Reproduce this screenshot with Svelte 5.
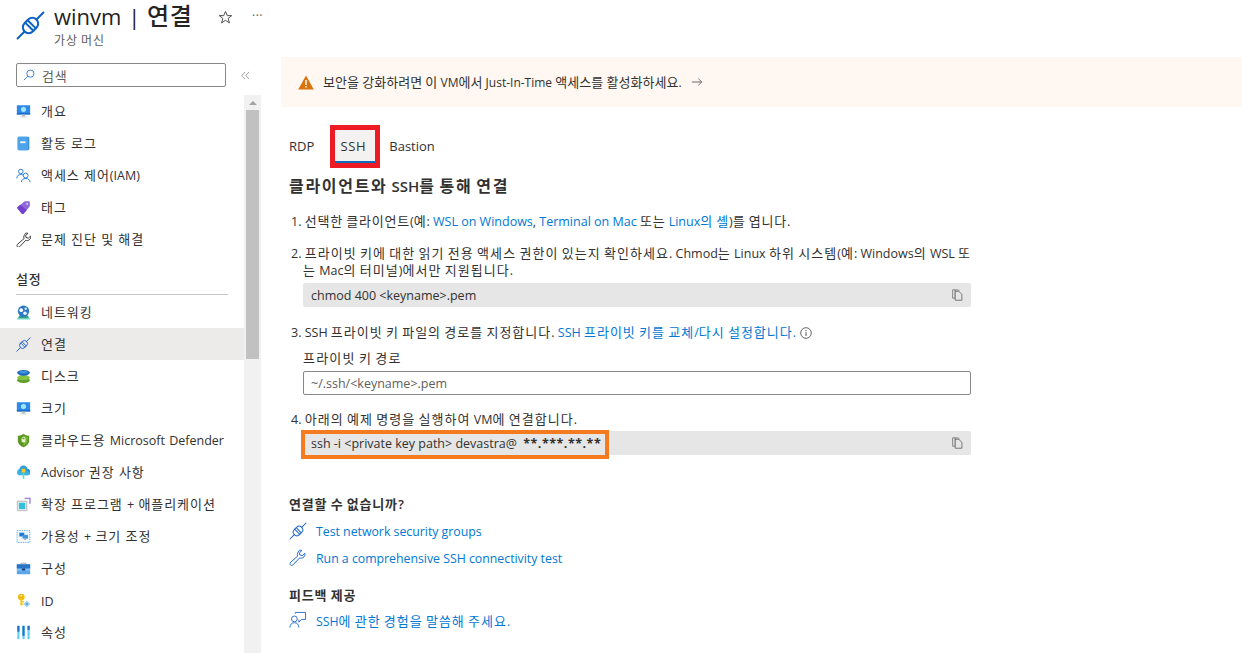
<script>
  const topItems = [
    { label: '개요', icon: 'monitor' },
    { label: '활동 로그', icon: 'log' },
    { label: '액세스 제어(IAM)', icon: 'iam' },
    { label: '태그', icon: 'tag' },
    { label: '문제 진단 및 해결', icon: 'wrench' }
  ];
  const settingItems = [
    { label: '네트워킹', icon: 'network' },
    { label: '연결', icon: 'plug', active: true },
    { label: '디스크', icon: 'disk' },
    { label: '크기', icon: 'monitor' },
    { label: '클라우드용 Microsoft Defender', icon: 'shield' },
    { label: 'Advisor 권장 사항', icon: 'advisor' },
    { label: '확장 프로그램 + 애플리케이션', icon: 'ext' },
    { label: '가용성 + 크기 조정', icon: 'avail' },
    { label: '구성', icon: 'case' },
    { label: 'ID', icon: 'key' },
    { label: '속성', icon: 'props' }
  ];
  // Hangul runs get their own metrics, because the Latin and Korean faces differ in width.
  const runs = (text) => text.split(/([\uac00-\ud7a3]+)/).filter(Boolean);
  const isKo = (run) => /[\uac00-\ud7a3]/.test(run);
</script>

{#snippet t(text)}{#each runs(text) as run}<span class:ko={isKo(run)}>{run}</span>{/each}{/snippet}

{#snippet plug(color, width)}
  <g transform="rotate(-45 10 10)" fill="none" stroke={color} stroke-width={width} stroke-linecap="round">
    <path d="M-2.6 10H4.2M15.8 10H22.6" />
    <rect x="4.2" y="6" width="11.6" height="8" rx="4" />
    <path d="M8.8 6V14M11.2 6V14" />
  </g>
{/snippet}

{#snippet wrench(color)}
  <path fill="none" stroke={color} stroke-width="1.1" stroke-linejoin="round" d="M11.5 1.5 L9.6 4.6 C9.2 5.6 9.2 6.8 9.7 7.8 L1.8 14.8 C1 15.8 1 16.8 1.6 17.6 C2.4 18.4 3.6 18.4 4.4 17.6 L11.8 9.9 C13 10.4 14.5 10.3 15.6 9.6 C17.2 8.6 18 6.8 17.6 4.8 L14.8 7.4 L12 6.6 L11.6 4.2 L14.4 1.6 C13.4 1.2 12.4 1.2 11.5 1.5 Z" />
{/snippet}

{#snippet icon(name)}
  <svg class="nav-icon" viewBox="0 0 18 18" aria-hidden="true">
    {#if name === 'monitor'}
      <rect x="1" y="1.5" width="16" height="11" rx=".6" fill="#2f89e6" />
      <rect x="1" y="11" width="16" height="1.5" fill="#1565c0" />
      <path d="M9 3.2 12 4.9V8.3L9 10 6 8.3V4.9Z" fill="#9fe3f8" />
      <path d="M7.3 12.5h3.4v2.3H7.3z" fill="#b3b6ba" />
      <path d="M5.5 14.8h7v1.2h-7z" fill="#c6c9cc" />
    {:else if name === 'log'}
      <rect x="2" y="1" width="14" height="16" rx="1.6" fill="#3a8fdd" />
      <rect x="2" y="1" width="12.4" height="16" rx="1.4" fill="#4ea3ea" />
      <rect x="5" y="6.4" width="6.4" height="2.2" fill="#f4f8fc" />
    {:else if name === 'iam'}
      <g fill="none" stroke="#2f7fd6" stroke-width="1.2">
        <circle cx="5.8" cy="4.2" r="2.7" />
        <path d="M1 12.5 C1 9.5 3 7.8 5.8 7.8 C7 7.8 8 8.1 8.8 8.7" />
        <circle cx="11.6" cy="9" r="2.9" />
        <path d="M6.4 17 C6.6 14 8.6 12.6 11.6 12.6 C14.6 12.6 16.6 14 16.9 17" />
      </g>
    {:else if name === 'tag'}
      <path d="M1.2 9.4 9.6 2 C10.2 1.5 10.8 1.4 11.6 1.4 H15.2 C16 1.4 16.6 2 16.6 2.8 V7 C16.6 7.6 16.4 8 16 8.5 L9 16.4 C8.4 17 7.6 17 7 16.4 Z" fill="#8f6ad6" />
      <path d="M1.2 9.4 7 16.4 C7.6 17 8.4 17 9 16.4 L13 12 5 5.8Z" fill="#7340cf" />
      <circle cx="13.4" cy="4.6" r="1.1" fill="#e5dcf6" />
    {:else if name === 'wrench'}
      {@render wrench('#2b2b2b')}
    {:else if name === 'network'}
      <path d="M1 15.8 H17 V17.4 H1Z" fill="#6fdcc4" />
      <path d="M3.8 13 H14.2 L15.6 15.8 H2.4Z" fill="#2f9f8c" />
      <circle cx="9" cy="7.5" r="6.8" fill="#2b78c8" />
      <circle cx="6.3" cy="6.2" r="2.2" fill="#fff" />
      <circle cx="11.6" cy="4.4" r="1.5" fill="#cfe9fa" />
      <circle cx="10.8" cy="10" r="2.1" fill="#eef7fd" />
    {:else if name === 'plug'}
      <g transform="scale(.9)">{@render plug('#1f66cc', 1.25)}</g>
    {:else if name === 'disk'}
      <ellipse cx="9" cy="13.4" rx="7.6" ry="3.4" fill="#5e9e28" />
      <rect x="4.5" y="7" width="9" height="6" fill="#59b4d9" />
      <ellipse cx="9" cy="10.6" rx="7.6" ry="3" fill="#84c441" />
      <ellipse cx="9" cy="4.6" rx="7.6" ry="3.4" fill="#1f66b8" />
      <ellipse cx="9" cy="3.8" rx="5" ry="1.6" fill="#3f93e0" />
    {:else if name === 'shield'}
      <path d="M9 .8 C11 2.4 13.6 3.2 15.8 3.2 V9 C15.8 13 12.6 15.6 9 17.2 C5.4 15.6 2.2 13 2.2 9 V3.2 C4.4 3.2 7 2.4 9 .8Z" fill="#5e9624" />
      <path d="M9 2.8 C10.6 4 12.4 4.6 14 4.8 V9 C14 12 11.6 14 9 15.2Z" fill="#76b82f" />
      <circle cx="9" cy="7" r="2" fill="none" stroke="#e8f4d8" stroke-width="1" />
      <rect x="6.8" y="7.4" width="4.4" height="3.6" rx=".5" fill="#e8f4d8" />
    {:else if name === 'advisor'}
      <circle cx="5" cy="8.4" r="3.6" fill="#32bedd" />
      <circle cx="13" cy="8.4" r="4" fill="#1e88d8" />
      <circle cx="9" cy="5.6" r="5" fill="#2aa0e0" />
      <rect x="1.6" y="7.6" width="15" height="4.6" rx="2.2" fill="#37b2e6" />
      <rect x="6.8" y="4.6" width="4.4" height="4.4" fill="#ffc72c" stroke="#c79a12" stroke-width=".4" />
      <path d="M8 9.2h2V16.6H8z" fill="#5fd8c0" />
    {:else if name === 'ext'}
      <rect x="1" y="4.4" width="12.6" height="12.6" fill="#c4c4c4" />
      <rect x="2.6" y="6" width="9.4" height="9.4" fill="#fff" />
      <rect x="3.4" y="6.8" width="7.8" height="7.8" fill="#32bedd" />
      <path d="M10.4 1.4 H16.8 V8" fill="none" stroke="#7f5fd0" stroke-width="1.3" />
    {:else if name === 'avail'}
      <rect x="1.3" y="1.9" width="15.4" height="14.2" fill="#f4f9fd" stroke="#4d9ade" stroke-width="1" stroke-dasharray="1.6 1.2" />
      <rect x="4" y="4.4" width="6" height="4.6" fill="#1f78d1" />
      <rect x="8" y="7" width="6.4" height="4.6" fill="#3a96dd" />
      <path d="M9.8 11.6h2.4v1.6H9.8z" fill="#a9adb1" />
    {:else if name === 'case'}
      <path d="M6 4.5 V2.6 H12 V4.5" fill="none" stroke="#9a9a9a" stroke-width="1" />
      <rect x="1" y="4" width="16" height="12" rx=".5" fill="#5aa5ec" />
      <rect x="1" y="4" width="16" height="4.6" fill="#2a74c4" />
      <rect x="1" y="10.2" width="16" height="1.1" fill="#a9d0f3" />
      <rect x="7" y="9" width="4" height="2.4" fill="#123f73" />
    {:else if name === 'key'}
      <circle cx="6.4" cy="4.8" r="4" fill="#f2b90c" />
      <circle cx="6.4" cy="3.2" r="1.1" fill="#fff5c9" />
      <path d="M5.2 7h2.4v8H5.2z" fill="#f2c811" />
      <path d="M7.4 10h2.2v1.5H7.4zM7.4 12.6h1.8v1.5H7.4z" fill="#f2c811" />
      <path d="M13 9 17.4 13.2 13 17.4 8.8 13.2Z" fill="#a8d6ee" />
      <circle cx="13" cy="13.2" r="1.5" fill="#5ba9d8" />
    {:else if name === 'props'}
      <rect x="1.6" y="1" width="2.6" height="16" fill="#5fd0f5" />
      <rect x="1.6" y="1" width="2.6" height="7" fill="#1d74c8" />
      <rect x="7.7" y="1" width="2.6" height="16" fill="#5fd0f5" />
      <rect x="7.7" y="1" width="2.6" height="12" fill="#1d74c8" />
      <rect x="13.8" y="1" width="2.6" height="16" fill="#5fd0f5" />
      <rect x="13.8" y="1" width="2.6" height="5" fill="#1d74c8" />
    {/if}
  </svg>
{/snippet}

{#snippet copy()}
  <svg class="copy" viewBox="0 0 12 13" aria-hidden="true">
    <path d="M3.5 2.5 V1 H7 L8 2.2" fill="none" stroke="#7d7d7d" />
    <path d="M.7.8 H3.5 V10 H.7Z" fill="none" stroke="#7d7d7d" stroke-width="1" />
    <path d="M3.5 2.5 H7.4 L10.8 5.8 V12.2 H3.5Z" fill="#e6e6e6" stroke="#6c6c6c" stroke-width="1" />
  </svg>
{/snippet}

<div class="page">
  <header class="header">
    <svg class="hero-icon" viewBox="0 0 20 20" aria-hidden="true">{@render plug('#0f62c6', 1.4)}</svg>
    <div class="title-block">
      <div class="title-row">
        <h1>{@render t('winvm | 연결')}</h1>
        <svg class="star" viewBox="0 0 16 16" aria-hidden="true"><path d="M8 1.6 9.9 6H14.6L10.8 9 12.2 13.8 8 11 3.8 13.8 5.2 9 1.4 6H6.1Z" fill="none" stroke="#444" stroke-width="1" stroke-linejoin="round" /></svg>
        <span class="more">···</span>
      </div>
      <div class="subtitle">{@render t('가상 머신')}</div>
    </div>
  </header>

  <div class="body">
    <aside class="sidebar">
      <div class="search-row">
        <div class="search">
          <svg viewBox="0 0 14 14" aria-hidden="true"><circle cx="8.6" cy="5.4" r="4.2" fill="none" stroke="#1f6fc4" stroke-width="1" /><path d="M5.6 8.4 1 13" stroke="#1f6fc4" stroke-width="1" /></svg>
          <span>{@render t('검색')}</span>
        </div>
        <svg class="collapse" viewBox="0 0 10 10" aria-hidden="true"><path d="M4.6 1 .8 5 4.6 9M9 1 5.2 5 9 9" fill="none" stroke="#8a8886" stroke-width=".9" /></svg>
      </div>
      <div class="nav-wrap">
        <nav class="nav">
          {#each topItems as item}
            <div class="item">{@render icon(item.icon)}<span class="label">{@render t(item.label)}</span></div>
          {/each}
          <div class="section">{@render t('설정')}</div>
          {#each settingItems as item}
            <div class="item" class:active={item.active}>{@render icon(item.icon)}<span class="label" class:latin={!isKo(item.label)}>{@render t(item.label)}</span></div>
          {/each}
        </nav>
        <div class="scrollbar">
          <div class="arrow"></div>
          <div class="thumb"></div>
        </div>
      </div>
    </aside>

    <main class="main">
      <div class="banner">
        <svg viewBox="0 0 16 15" aria-hidden="true"><path d="M8 .6 15.8 14.4H.2Z" fill="#d9730d" /><path d="M7.3 5h1.4v5H7.3zM7.3 11h1.4v1.5H7.3z" fill="#fff" /></svg>
        <span class="banner-text">{@render t('보안을 강화하려면 이 VM에서 Just-In-Time 액세스를 활성화하세요.')}</span>
        <svg class="arrow-right" viewBox="0 0 14 10" aria-hidden="true"><path d="M1 5H12.4M8.6 1.2 12.6 5 8.6 8.8" fill="none" stroke="#555" stroke-width="1" /></svg>
      </div>

      <div class="content">
        <div class="tabs">
          <div class="tab">RDP</div>
          <div class="tab selected">SSH<div class="red-box"></div></div>
          <div class="tab">Bastion</div>
        </div>

        <h2>{@render t('클라이언트와 SSH를 통해 연결')}</h2>

        <ol class="steps">
          <li class="s1">{@render t('1. 선택한 클라이언트(예: ')}<a href="#a">WSL on Windows</a>, <a href="#a">Terminal on Mac</a>{@render t(' 또는 ')}<a href="#a">{@render t('Linux의 셸')}</a>{@render t(')를 엽니다.')}</li>
          <li class="s2">
            <div class="wrap">{@render t('2. 프라이빗 키에 대한 읽기 전용 액세스 권한이 있는지 확인하세요. Chmod는 Linux 하위 시스템(예: Windows의 WSL 또')}<br /><span class="hang">{@render t('는 Mac의 터미널)에서만 지원됩니다.')}</span></div>
            <div class="code">chmod 400 &lt;keyname&gt;.pem{@render copy()}</div>
          </li>
          <li class="s3">
            <div>{@render t('3. SSH 프라이빗 키 파일의 경로를 지정합니다. ')}<a href="#a">{@render t('SSH 프라이빗 키를 교체/다시 설정합니다.')}</a>
              <svg class="info" viewBox="0 0 12 12" aria-hidden="true"><circle cx="6" cy="6" r="5.3" fill="none" stroke="#555" stroke-width=".9" /><path d="M6 5.2V9M6 3v1.2" stroke="#555" stroke-width="1" /></svg>
            </div>
            <div class="field-label">{@render t('프라이빗 키 경로')}</div>
            <div class="input">~/.ssh/&lt;keyname&gt;.pem</div>
          </li>
          <li class="s4">
            <div>{@render t('4. 아래의 예제 명령을 실행하여 VM에 연결합니다.')}</div>
            <div class="code">
              <span class="cmd">ssh -i &lt;private key path&gt; devastra@ <b>**.***.**.**</b><span class="orange-box"></span></span>{@render copy()}
            </div>
          </li>
        </ol>

        <h3 class="trouble">{@render t('연결할 수 없습니까?')}</h3>
        <a class="link first" href="#a"><svg viewBox="0 0 20 20" aria-hidden="true">{@render plug('#1f66cc', 1.1)}</svg><span>Test network security groups</span></a>
        <a class="link second" href="#a"><svg viewBox="0 0 20 20" aria-hidden="true">{@render wrench('#1f66cc')}</svg><span>Run a comprehensive SSH connectivity test</span></a>

        <h3 class="feedback">{@render t('피드백 제공')}</h3>
        <a class="link last" href="#a">
          <svg viewBox="0 0 20 20" aria-hidden="true"><g fill="none" stroke="#1f66cc" stroke-width="1"><path d="M7 3 V1.6 H18.4 V9.4 H14 L11 12.4 V9.6" /><circle cx="6" cy="8.8" r="3.2" /><path d="M1 18.4 C1.2 14.8 3 13 6 13 C9 13 10.8 14.8 11 18.4" /></g></svg>
          <span>{@render t('SSH에 관한 경험을 말씀해 주세요.')}</span>
        </a>
      </div>
    </main>
  </div>
</div>

<style>
  :global(body) {
    margin: 0;
    background: #fff;
    overflow: hidden;
  }
  .page {
    width: 1242px;
    height: 653px;
    overflow: hidden;
    font-family: "Open Sans", "Noto Sans CJK KR", sans-serif;
    font-size: 12.5px;
    color: #323130;
  }
  .ko {
    font-size: 13px;
    letter-spacing: .8px;
  }
  a {
    color: #0078d4;
    text-decoration: none;
  }
  .header {
    height: 55px;
    display: flex;
    gap: 9px;
    padding: 1px 0 0 16px;
    box-sizing: border-box;
  }
  .hero-icon {
    width: 29px;
    height: 29px;
    margin-top: 10px;
  }
  .title-row {
    display: flex;
    align-items: center;
    height: 30px;
  }
  h1 {
    margin: 0;
    font-size: 22px;
    font-weight: 500;
    line-height: 30px;
    color: #252423;
    width: 164px;
    white-space: nowrap;
    word-spacing: 1px;
  }
  h1 .ko {
    font-size: 24px;
    letter-spacing: .6px;
  }
  .star {
    width: 15px;
    height: 15px;
    margin-top: 2px;
  }
  .more {
    margin-left: 19px;
    margin-top: -2px;
    font-size: 12px;
    color: #555;
    letter-spacing: .5px;
  }
  .subtitle {
    font-size: 12px;
    line-height: 16px;
    margin-top: 2px;
    color: #605e5c;
  }
  .subtitle .ko {
    font-size: 12px;
    letter-spacing: .9px;
  }
  .body {
    display: flex;
    height: 598px;
  }
  .sidebar {
    width: 261px;
    flex: none;
  }
  .search-row {
    display: flex;
    height: 41px;
    padding: 8px 0 0 16px;
    box-sizing: border-box;
    gap: 15px;
  }
  .search {
    width: 210px;
    height: 24px;
    box-sizing: border-box;
    border: 1px solid #8a8886;
    border-radius: 2px;
    display: flex;
    align-items: center;
    gap: 7px;
    padding: 0 6px;
    color: #605e5c;
  }
  .search svg {
    width: 12px;
    height: 12px;
  }
  .collapse {
    width: 9px;
    height: 9px;
    margin-top: 8px;
  }
  .nav-wrap {
    display: flex;
    height: 557px;
  }
  .nav {
    width: 244px;
    flex: none;
  }
  .item {
    height: 32px;
    display: flex;
    align-items: center;
    gap: 10px;
    padding-left: 16px;
    position: relative;
    top: -1px;
    word-spacing: 1px;
  }
  .label {
    padding-bottom: 2px;
  }
  .label.latin {
    padding: 2px 0 0;
  }
  .label .ko {
    letter-spacing: .95px;
  }
  .item.active {
    background: #edebe9;
  }
  .nav-icon {
    width: 15px;
    height: 15px;
    flex: none;
  }
  .section {
    height: 23px;
    margin: 10px 16px 1px;
    padding-top: 6px;
    font-weight: 500;
    line-height: 17px;
    border-bottom: 1px solid #c8c6c4;
    color: #323130;
    position: relative;
    top: -1px;
  }
  .scrollbar {
    width: 17px;
    background: #f1f1f1;
    margin-top: -1px;
  }
  .arrow {
    height: 15px;
    position: relative;
  }
  .arrow::before {
    content: "";
    position: absolute;
    left: 5px;
    top: 6px;
    border: 4px solid transparent;
    border-top: 0;
    border-bottom-color: #a3a3a3;
  }
  .thumb {
    height: 249px;
    margin: 0 2px;
    background: #c1c1c1;
  }
  .main {
    flex: 1;
    padding: 2px 0 0 20px;
  }
  .banner {
    height: 50px;
    background: #fff8f2;
    display: flex;
    align-items: center;
    padding-left: 17px;
    gap: 9px;
    color: #323130;
    font-size: 12px;
  }
  .banner-text {
    padding-bottom: 2px;
  }
  .banner-text .ko {
    letter-spacing: .05px;
  }
  .banner svg {
    width: 16px;
    height: 15px;
  }
  .banner .arrow-right {
    width: 12px;
    height: 10px;
  }
  .content {
    width: 690px;
    padding-left: 8px;
  }
  .tabs {
    display: flex;
    margin-top: 23px;
    height: 33px;
    margin-left: -8px;
    padding-left: 3px;
  }
  .tab {
    padding: 0 5px 2px;
    margin-right: 9px;
    display: flex;
    align-items: center;
    position: relative;
    font-size: 13px;
    box-sizing: border-box;
    height: 33px;
  }
  .tab.selected {
    background: #f3f2f1;
    border-bottom: 2px solid #0f6cbd;
    font-weight: 500;
    letter-spacing: .6px;
    width: 40px;
    justify-content: center;
    padding: 0 4px 0 0;
    margin-left: 7px;
    margin-right: 9px;
  }
  .red-box {
    position: absolute;
    left: -5px;
    right: -5px;
    top: -5px;
    bottom: -7px;
    border: 5px solid #ed1c24;
  }
  h2 {
    margin: 14px 0 0;
    font-size: 15px;
    line-height: 18px;
    font-weight: 600;
    color: #323130;
  }
  h2 .ko {
    font-size: 16px;
    letter-spacing: 1.7px;
  }
  .steps {
    list-style: none;
    margin: 0;
    padding: 0 0 0 2px;
    line-height: 17px;
  }
  .s1 {
    margin-top: 18px;
  }
  .s2 {
    margin-top: 15px;
  }
  .s2 .ko,
  .s4 .ko {
    letter-spacing: 1.05px;
  }
  .s3 .ko {
    letter-spacing: 1px;
  }
  .wrap {
    white-space: nowrap;
  }
  .hang {
    padding-left: 12px;
  }
  .code {
    margin: 4px 0 0 12px;
    height: 24px;
    width: 668px;
    background: #e6e6e6;
    border-radius: 2px;
    display: flex;
    align-items: center;
    justify-content: space-between;
    padding: 0 8px;
    box-sizing: border-box;
    white-space: nowrap;
  }
  .copy {
    width: 11px;
    height: 12px;
    flex: none;
  }
  .s3 {
    margin-top: 17px;
  }
  .info {
    width: 12px;
    height: 12px;
    vertical-align: -2px;
    margin-left: 1px;
  }
  .field-label {
    margin: 8px 0 0 12px;
    line-height: 18px;
  }
  .s3 .field-label .ko {
    letter-spacing: 1.2px;
  }
  .input {
    margin: 3px 0 0 12px;
    width: 668px;
    height: 24px;
    box-sizing: border-box;
    border: 1px solid #8a8886;
    border-radius: 2px;
    display: flex;
    align-items: center;
    padding: 0 7px;
    color: #605e5c;
  }
  .s4 {
    margin-top: 16px;
  }
  .s4 .code {
    margin-top: 3px;
  }
  .cmd {
    position: relative;
  }
  .cmd b {
    font-weight: 700;
    margin-left: 3px;
    letter-spacing: .5px;
  }
  .orange-box {
    position: absolute;
    left: -10px;
    right: -8px;
    top: -5px;
    bottom: -7px;
    border: 4px solid #f47b20;
  }
  h3 {
    margin: 0;
    font-size: 13px;
    line-height: 18px;
    font-weight: 600;
    color: #323130;
  }
  .trouble {
    margin-top: 40px;
  }
  .feedback {
    margin-top: 19px;
  }
  .link {
    display: flex;
    align-items: center;
    gap: 9px;
    font-size: 12.3px;
    height: 18px;
    margin-top: 8px;
  }
  .link.first,
  .link.second {
    margin-top: 9px;
  }
  .link.last {
    margin-top: 7px;
  }
  .link.last .ko {
    letter-spacing: 1px;
  }
  .link svg {
    width: 18px;
    height: 18px;
    flex: none;
  }
</style>
